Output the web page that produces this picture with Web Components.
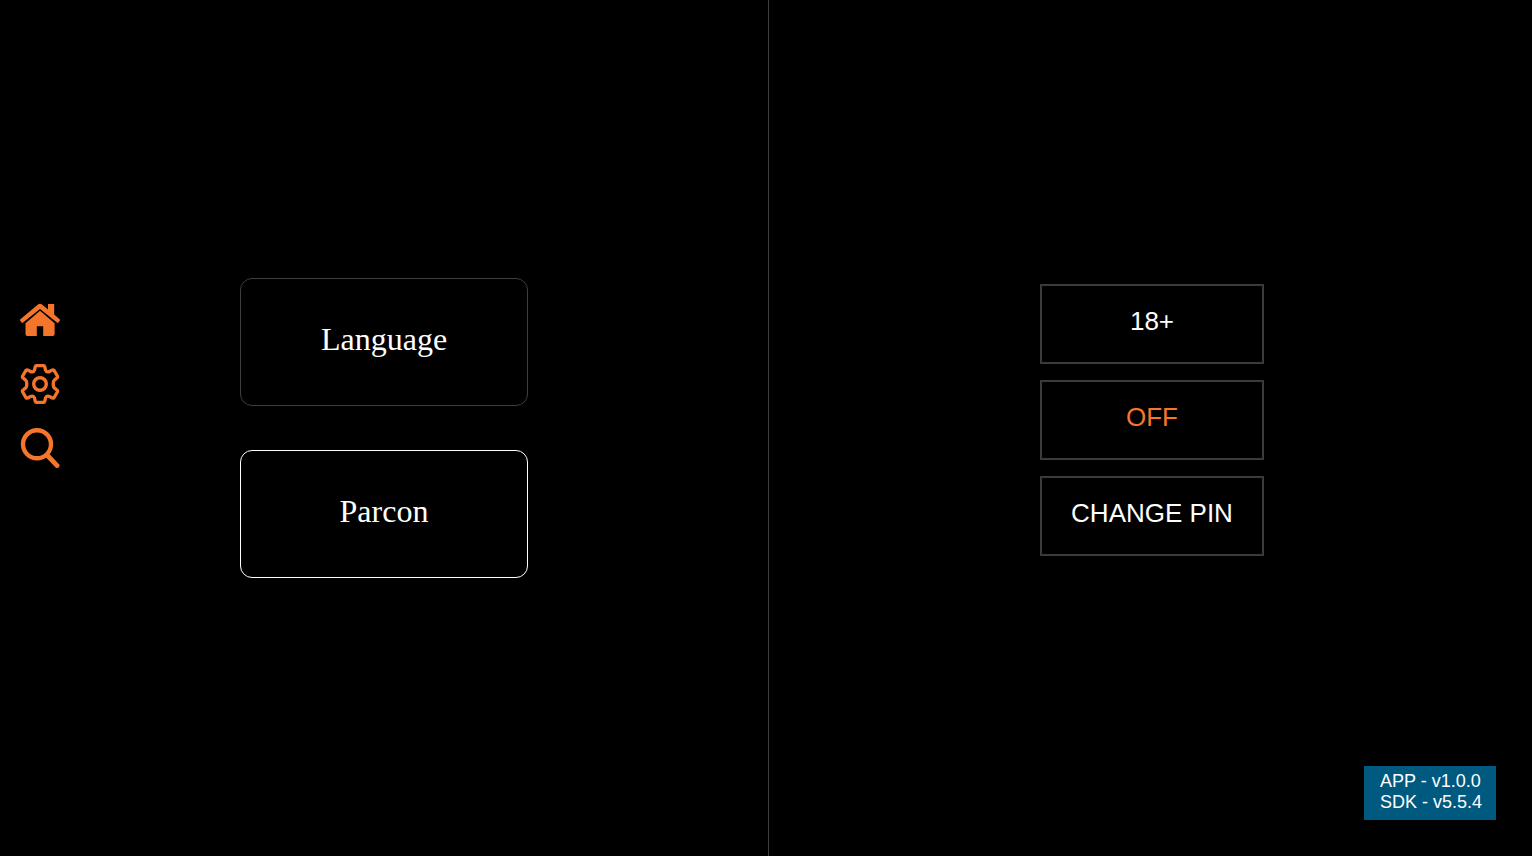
<!DOCTYPE html>
<html lang="en">
<head>
<meta charset="utf-8">
<title>Settings</title>
<style>
  html, body { height: 100%; margin: 0; background: #000; }
  body { color: #fff; font-family: "Liberation Sans", Arial, sans-serif; }
</style>
</head>
<body>
<settings-app></settings-app>

<script>
const define = (name, html) => {
  const template = document.createElement('template');
  template.innerHTML = html;
  customElements.define(name, class extends HTMLElement {
    constructor() {
      super();
      this.attachShadow({ mode: 'open' }).append(template.content.cloneNode(true));
    }
  });
};

define('side-nav', `
  <style>
    :host { display: block; }
    nav { display: flex; flex-direction: column; gap: 24px; }
    a { display: block; width: 40px; height: 40px; color: #f5762a; }
    svg { display: block; width: 100%; height: 100%; }
  </style>
  <nav aria-label="Main">
    <a href="#home" aria-label="Home"><svg viewBox="0 0 40 40" fill="currentColor">
      <path d="M20 10.8 L34.6 23.2 V34.2 Q34.6 36 32.8 36 H23.2 V26.2 H16.8 V36 H7.3 Q5.5 36 5.5 34.2 V23.2Z"/>
      <path d="M18 4.5 Q20 3 22 4.5 L28 9.5 V4 H34.2 V14.6 L39.6 19.2 Q40.4 20 39.8 20.8 L38.4 22.5 Q37.7 23.2 36.9 22.6 L20 8.9 L3.1 22.6 Q2.3 23.2 1.6 22.5 L.2 20.8 Q-.4 20 .4 19.2Z"/>
    </svg></a>
    <a href="#settings" aria-label="Settings"><svg viewBox="0 0 40 40" fill="none" stroke="currentColor" stroke-width="3.3" stroke-linejoin="round">
      <path d="M16.8 1.6 H23.2 Q24.5 1.6 24.8 2.9 L25.5 6.1 Q26 7.7 27.6 7.9 Q28.6 8 29.5 7.5 L32.2 6.1 Q33.5 5.5 34.3 6.7 L37.3 12 Q38 13.2 36.9 14 L34.9 15.6 Q33.3 16.8 33.3 18.6 V21.4 Q33.3 23.2 34.9 24.4 L36.9 26 Q38 26.8 37.3 28 L34.3 33.3 Q33.5 34.5 32.2 33.9 L29.5 32.5 Q28.6 32 27.6 32.1 Q26 32.3 25.5 33.9 L24.8 37.1 Q24.5 38.4 23.2 38.4 H16.8 Q15.5 38.4 15.2 37.1 L14.5 33.9 Q14 32.3 12.4 32.1 Q11.4 32 10.5 32.5 L7.8 33.9 Q6.5 34.5 5.7 33.3 L2.7 28 Q2 26.8 3.1 26 L5.1 24.4 Q6.7 23.2 6.7 21.4 V18.6 Q6.7 16.8 5.1 15.6 L3.1 14 Q2 13.2 2.7 12 L5.7 6.7 Q6.5 5.5 7.8 6.1 L10.5 7.5 Q11.4 8 12.4 7.9 Q14 7.7 14.5 6.1 L15.2 2.9 Q15.5 1.6 16.8 1.6Z"/>
      <circle cx="20" cy="20" r="6.3" stroke-width="3.4"/>
    </svg></a>
    <a href="#search" aria-label="Search"><svg viewBox="0 0 40 40" fill="none" stroke="currentColor" stroke-linecap="round">
      <circle cx="17" cy="16.3" r="14" stroke-width="4.4"/>
      <path d="M27 27 L37.1 37.6" stroke-width="4.8"/>
    </svg></a>
  </nav>
`);

define('menu-card', `
  <style>
    :host { display: block; --edge: #3f3f3f; }
    :host([selected]) { --edge: #fff; }
    button {
      display: block; box-sizing: border-box; width: 100%; height: 128px;
      padding: 0 16px 6px; border: 1px solid var(--edge); border-radius: 12px;
      background: #000; color: inherit; cursor: pointer;
      font: 32px/36px "Liberation Serif", "Times New Roman", serif;
    }
  </style>
  <button type="button"><slot></slot></button>
`);

define('option-button', `
  <style>
    :host { display: block; }
    button {
      display: block; box-sizing: border-box; width: 100%; height: 80px;
      padding: 0 16px 6px; border: 2px solid #3c3a3b;
      background: #000; color: inherit; cursor: pointer;
      font: 26px/30px "Liberation Sans", Arial, sans-serif;
    }
    :host([accent]) button { color: #f5762a; }
  </style>
  <button type="button"><slot></slot></button>
`);

define('version-badge', `
  <style>
    :host {
      display: block; padding: 5px 14px 7px 16px; background: #00597f; color: #fff;
      font: 18px/21px "Liberation Sans", Arial, sans-serif;
    }
    ::slotted(div) { white-space: nowrap; }
  </style>
  <slot></slot>
`);

define('settings-app', `
  <style>
    :host { display: grid; grid-template-columns: calc(50% + 2px) 1fr; min-height: 100%; position: relative; }
    section { display: flex; flex-direction: column; align-items: center; justify-content: center; }
    .menu { gap: 44px; }
    .options { gap: 16px; padding: 0 0 16px 3px; border-left: 1px solid #3f3f3f; }
    menu-card { width: 288px; }
    option-button { width: 224px; }
    .rail { position: absolute; left: 20px; top: 0; bottom: 88px; display: flex; align-items: center; }
    version-badge { position: absolute; right: 36px; bottom: 36px; }
  </style>
  <section class="menu" aria-label="Settings menu">
    <menu-card>Language</menu-card>
    <menu-card selected>Parcon</menu-card>
  </section>
  <section class="options" aria-label="Parental control">
    <option-button>18+</option-button>
    <option-button accent>OFF</option-button>
    <option-button>CHANGE PIN</option-button>
  </section>
  <div class="rail"><side-nav></side-nav></div>
  <version-badge><div>APP - v1.0.0</div><div>SDK - v5.5.4</div></version-badge>
`);
</script>
</body>
</html>
